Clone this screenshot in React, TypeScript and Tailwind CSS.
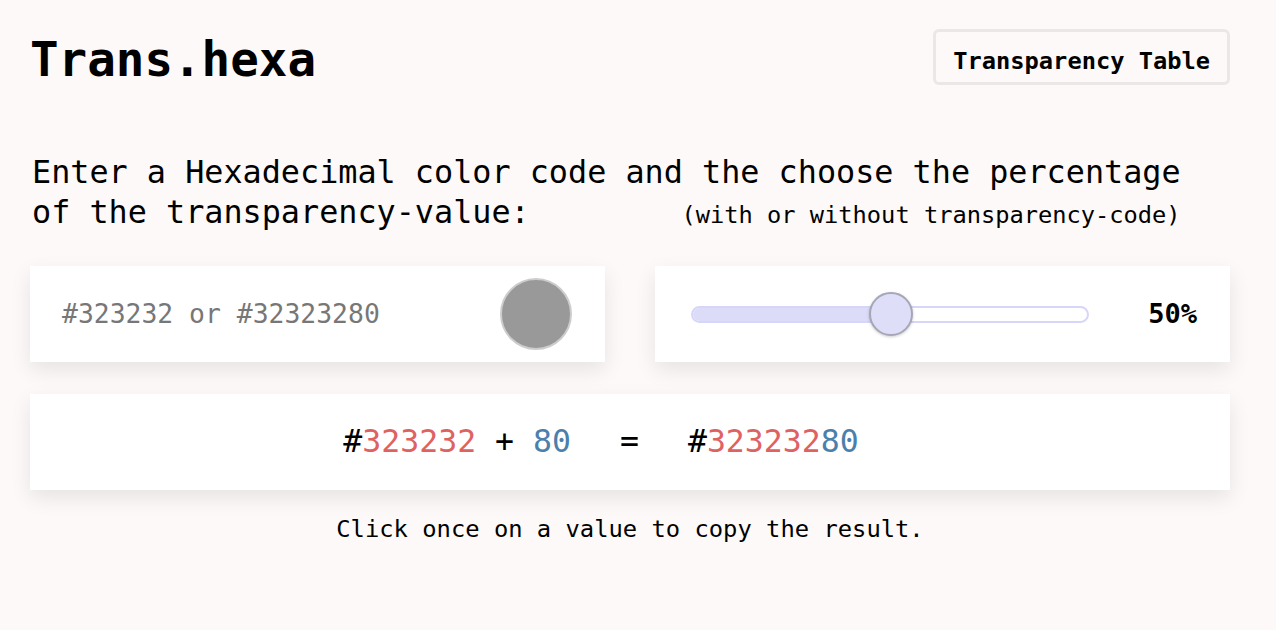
import React from "react";

const mono = { fontFamily: '"DejaVu Sans Mono", "Liberation Mono", monospace' };

function HexInput() {
  return (
    <div className="flex h-[96px] items-center justify-between bg-white pl-[32px] pr-[33px] shadow-[0_8px_20px_rgba(0,0,0,0.09)]">
      <span className="text-[26.4px] text-[#777777]">#323232 or #32323280</span>
      <div className="h-[72px] w-[72px] rounded-full border-2 border-[#cdcdcd] bg-[#999999]" />
    </div>
  );
}

function Slider() {
  return (
    <div className="flex h-[96px] items-center bg-white pl-[36px] pr-[33px] shadow-[0_8px_20px_rgba(0,0,0,0.09)]">
      <div className="relative h-[17px] w-[398px] rounded-full border-2 border-[#d6d6fa] bg-white">
        <div className="h-full w-[198px] rounded-l-full bg-[#dddcf8]" />
        <div className="absolute left-[176px] top-1/2 h-[44px] w-[44px] -translate-y-1/2 rounded-full border-2 border-[#a6a6b8] bg-[#dedef8] shadow-[0_1px_3px_rgba(0,0,0,0.2)]" />
      </div>
      <span className="ml-auto text-[27px] font-bold text-black">50%</span>
    </div>
  );
}

export default function App() {
  return (
    <div className="min-h-[630px] bg-[#fdf9f8] text-black" style={mono}>
      <div className="ml-[30px] w-[1200px] pt-[29px]">
        <header className="flex h-[56px] items-center justify-between">
          <h1 className="pt-[6px] text-[47.5px] font-bold leading-none">Trans.hexa</h1>
          <button className="h-[56px] rounded-md border-[3px] border-[#ebe7e6] px-[17px] pt-[10px] text-[23.7px] font-bold">
            Transparency Table
          </button>
        </header>

        <div className="mt-[67px] w-fit pl-[2px] text-[31.8px] leading-[40px]">
          <div>Enter a Hexadecimal color code and the choose the percentage</div>
          <div className="flex items-baseline justify-between">
            <span>of the transparency-value:</span>
            <span className="text-[23.7px]">(with or without transparency-code)</span>
          </div>
        </div>

        <div className="mt-[31px] grid grid-cols-2 gap-[50px]">
          <HexInput />
          <Slider />
        </div>

        <div className="mt-[32px] flex h-[96px] items-center justify-center bg-white pr-[58px] text-[31.5px] shadow-[0_8px_20px_rgba(0,0,0,0.09)]">
          <span>#</span>
          <span className="text-[#df6262]">323232</span>
          <span className="whitespace-pre"> + </span>
          <span className="text-[#4b80ab]">80</span>
          <span className="mx-[49px]">=</span>
          <span>#</span>
          <span className="text-[#df6262]">323232</span>
          <span className="text-[#4b80ab]">80</span>
        </div>

        <p className="mt-[22px] text-center text-[23.8px]">Click once on a value to copy the result.</p>
      </div>
    </div>
  );
}
